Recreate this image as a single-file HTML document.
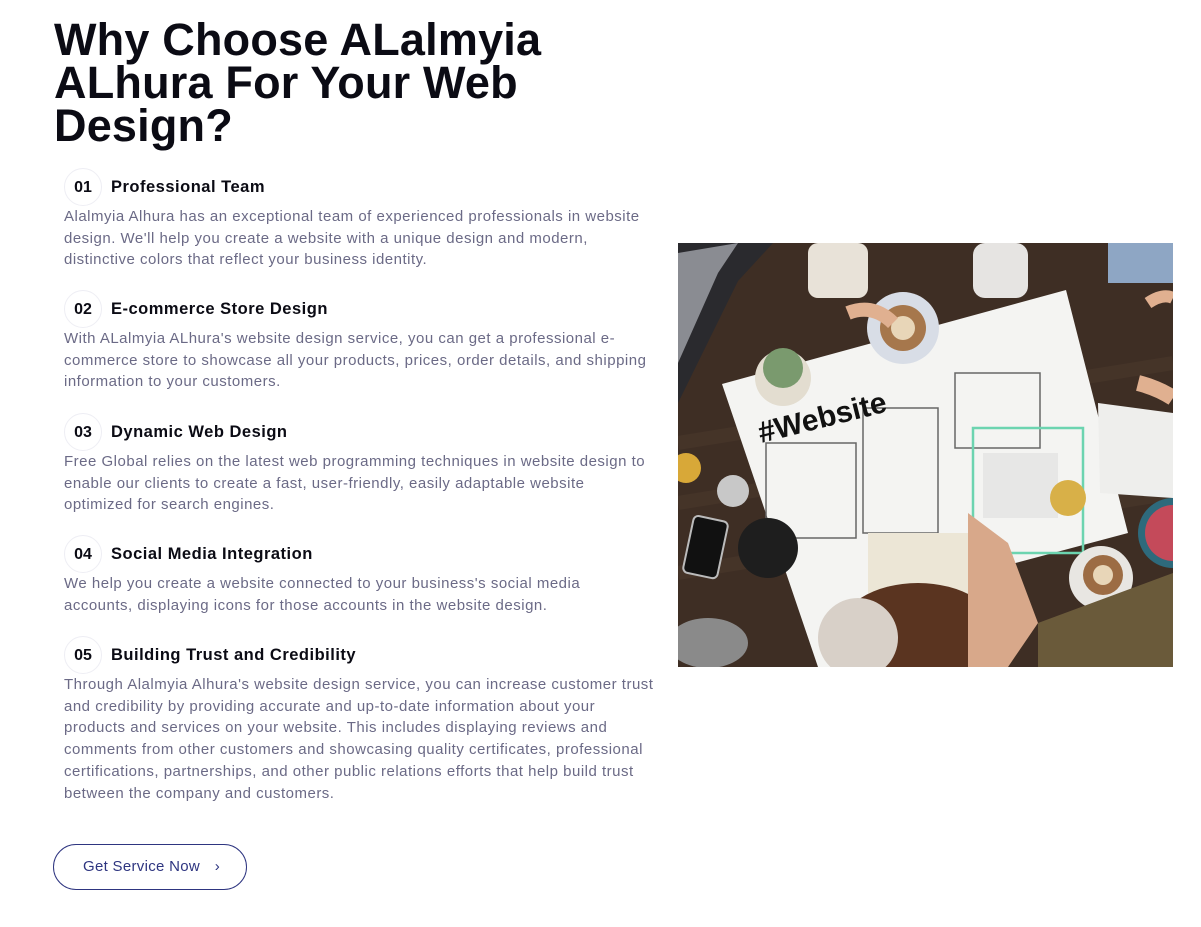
<!DOCTYPE html>
<html><head><meta charset="utf-8"><style>
*{margin:0;padding:0;box-sizing:border-box}
body{width:1201px;height:927px;background:#fff;font-family:"Liberation Sans",Arial,sans-serif;position:relative;overflow:hidden}
h1{position:absolute;left:54px;top:18px;font-size:45px;line-height:43px;font-weight:700;color:#0b0b14;letter-spacing:0.2px;width:600px}
.item{position:absolute;left:64px}
.num{position:absolute;left:0;top:0;width:38px;height:38px;border-radius:50%;border:1px solid #eeeef4;font-weight:700;font-size:16px;line-height:37px;text-align:center;color:#0b0b14}
.t{position:absolute;left:47px;top:10px;font-weight:700;font-size:16.5px;color:#0b0b14;white-space:nowrap;letter-spacing:0.5px}
.b{position:absolute;left:0;top:38px;font-size:15px;line-height:21.7px;color:#6b6a86;white-space:nowrap;letter-spacing:0.5px}
.btn{position:absolute;left:53px;top:844px;width:194px;height:46px;border:1.3px solid #2e3580;border-radius:23px;color:#2e3580;font-size:15px;line-height:44px;padding-left:29px;letter-spacing:0.3px}
.btn span{position:absolute;right:26px;top:0}
.img{position:absolute;left:678px;top:243px;width:495px;height:424px}
</style></head><body>
<h1>Why Choose ALalmyia<br>ALhura For Your Web<br>Design?</h1>

<div class="item" style="top:168px"><div class="num">01</div><div class="t">Professional Team</div>
<div class="b">Alalmyia Alhura has an exceptional team of experienced professionals in website<br>design. We'll help you create a website with a unique design and modern,<br>distinctive colors that reflect your business identity.</div></div>

<div class="item" style="top:290px"><div class="num">02</div><div class="t">E-commerce Store Design</div>
<div class="b">With ALalmyia ALhura's website design service, you can get a professional e-<br>commerce store to showcase all your products, prices, order details, and shipping<br>information to your customers.</div></div>

<div class="item" style="top:413px"><div class="num">03</div><div class="t">Dynamic Web Design</div>
<div class="b">Free Global relies on the latest web programming techniques in website design to<br>enable our clients to create a fast, user-friendly, easily adaptable website<br>optimized for search engines.</div></div>

<div class="item" style="top:535px"><div class="num">04</div><div class="t">Social Media Integration</div>
<div class="b">We help you create a website connected to your business's social media<br>accounts, displaying icons for those accounts in the website design.</div></div>

<div class="item" style="top:636px"><div class="num">05</div><div class="t">Building Trust and Credibility</div>
<div class="b">Through Alalmyia Alhura's website design service, you can increase customer trust<br>and credibility by providing accurate and up-to-date information about your<br>products and services on your website. This includes displaying reviews and<br>comments from other customers and showcasing quality certificates, professional<br>certifications, partnerships, and other public relations efforts that help build trust<br>between the company and customers.</div></div>

<div class="btn">Get Service Now<span>&#8250;</span></div>

<svg class="img" viewBox="0 0 495 424" xmlns="http://www.w3.org/2000/svg">
<rect width="495" height="424" fill="#3e2e24"/>
<path d="M0 200 L495 120 M0 260 L495 180 M0 330 L495 250" stroke="#4a382c" stroke-width="14" opacity=".6"/>
<polygon points="0,0 95,0 60,38 0,160" fill="#2a2a2e"/>
<polygon points="0,10 60,0 40,30 0,120" fill="#8a8c92"/>
<polygon points="44,141 388,47 450,290 330,322 300,424 140,424" fill="#f4f4f2"/>
<polygon points="420,160 495,170 495,255 422,250" fill="#eeeeec"/>
<rect x="88" y="200" width="90" height="95" fill="none" stroke="#666" stroke-width="1.5"/>
<rect x="185" y="165" width="75" height="125" fill="none" stroke="#666" stroke-width="1.5"/>
<rect x="277" y="130" width="85" height="75" fill="none" stroke="#666" stroke-width="1.5"/>
<rect x="295" y="185" width="110" height="125" fill="none" stroke="#6cd4b0" stroke-width="2.5"/>
<rect x="305" y="210" width="75" height="65" fill="#ddd" opacity=".6"/>
<text x="83" y="200" font-family="Liberation Sans" font-weight="700" font-size="30" fill="#111" transform="rotate(-14 83 200)">#Website</text>
<rect x="130" y="0" width="60" height="55" rx="10" fill="#e8e2d8"/>
<rect x="295" y="0" width="55" height="55" rx="12" fill="#e6e4e2"/>
<rect x="430" y="0" width="65" height="40" fill="#8ea6c4"/>
<circle cx="225" cy="85" r="36" fill="#d8dde6"/><circle cx="225" cy="85" r="23" fill="#a6774c"/><circle cx="225" cy="85" r="12" fill="#e8d6b8"/>
<circle cx="105" cy="135" r="28" fill="#e3ddd0"/><circle cx="105" cy="125" r="20" fill="#7a9a6e"/>
<circle cx="423" cy="335" r="32" fill="#e8e6e2"/><circle cx="425" cy="332" r="20" fill="#9c6c44"/><circle cx="425" cy="332" r="10" fill="#e8d6b8"/>
<circle cx="495" cy="290" r="35" fill="#2e6a7c"/><circle cx="495" cy="290" r="28" fill="#c44a5a"/>
<circle cx="390" cy="255" r="18" fill="#d8b048"/>
<circle cx="55" cy="248" r="16" fill="#c8c8c8"/>
<circle cx="8" cy="225" r="15" fill="#d8a838"/>
<rect x="10" y="275" width="35" height="58" rx="5" fill="#111" stroke="#bbb" stroke-width="2" transform="rotate(12 27 304)"/>
<circle cx="90" cy="305" r="30" fill="#1e1e1e"/>
<rect x="190" y="290" width="120" height="80" fill="#ece6d6"/>
<ellipse cx="240" cy="390" rx="80" ry="50" fill="#5a3420"/>
<ellipse cx="180" cy="395" rx="40" ry="40" fill="#d8d0c8"/>
<polygon points="290,270 330,300 360,380 330,424 290,424" fill="#d8a88a"/>
<polygon points="360,380 495,330 495,424 360,424" fill="#6a5a3a"/>
<ellipse cx="30" cy="400" rx="40" ry="25" fill="#8a8a8a"/>
<path d="M170 70 Q195 60 215 80" stroke="#e0b090" stroke-width="14" fill="none"/>
<path d="M460 140 Q480 145 495 155" stroke="#e0b090" stroke-width="16" fill="none"/>
<path d="M470 60 Q485 50 495 55" stroke="#e0b090" stroke-width="12" fill="none"/>
</svg>
</body></html>
